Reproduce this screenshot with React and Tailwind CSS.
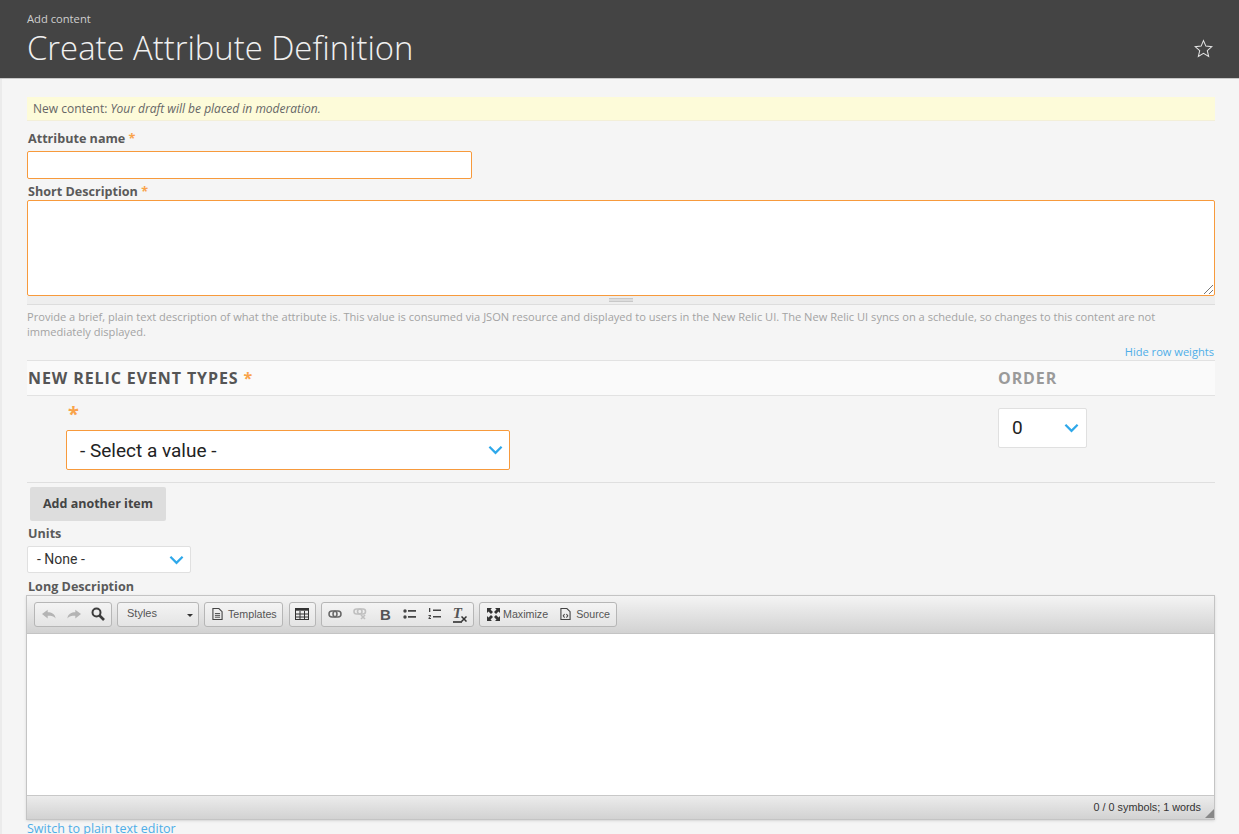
import React from "react";

const font = { fontFamily: '"Open Sans", sans-serif' };

function Chevron({ className }) {
  return (
    <svg viewBox="0 0 16 10" className={className} fill="none" stroke="#2ea8ea" strokeWidth="2.4">
      <path d="M1.5 1.5 8 8l6.5-6.5" />
    </svg>
  );
}

function Req() {
  return <span className="text-[#f9a34a]">*</span>;
}

function ToolGroup({ className = "", children }) {
  return (
    <div className={`h-[25px] flex items-center rounded-[3px] border border-[#b6b6b6] bg-gradient-to-b from-[#f4f4f4] to-[#e4e4e4] ${className}`}>
      {children}
    </div>
  );
}

function PageIcon({ className = "" }) {
  return (
    <svg viewBox="0 0 12 14" className={`w-[11px] h-[14px] shrink-0 ${className}`} fill="none" stroke="#444" strokeWidth="1.2">
      <path d="M1 1h6.500L11 4.500V13H1z" />
      <path d="M3.200 6.500h5.600M3.200 8.500h5.600M3.200 10.500h5.600" strokeWidth="1" />
    </svg>
  );
}

function Toolbar() {
  return (
    <div className="h-[38px] flex items-center pl-[7px] pb-[1px] bg-gradient-to-b from-[#f4f4f4] to-[#d2d2d2] border-b border-[#c4c4c4]">
      <ToolGroup className="w-[78px] pl-[7px]">
        <svg viewBox="0 0 16 12" className="w-[14px] h-[12px] shrink-0" fill="#b4b4b4">
          <path d="M0 6 6.500 1v3C11 4 15 6 15.500 11 13.500 8.500 11 8 6.500 8v3z" />
        </svg>
        <svg viewBox="0 0 16 12" className="w-[14px] h-[12px] shrink-0 ml-[11px]" fill="#b4b4b4">
          <path d="M16 6 9.500 1v3C5 4 1 6 .5 11 2.500 8.500 5 8 9.500 8v3z" />
        </svg>
        <svg viewBox="0 0 14 14" className="w-[14px] h-[14px] shrink-0 ml-[10px]" fill="none" stroke="#3c3c3c">
          <circle cx="5.500" cy="5.500" r="4" strokeWidth="2" />
          <path d="m8.500 8.500 4.500 4.500" strokeWidth="2.600" />
        </svg>
      </ToolGroup>
      <ToolGroup className="w-[82px] ml-[5px] pl-[9px] pr-[5px] justify-between text-[#555]">
        <span className="text-[11px] -mt-[2px]">Styles</span>
        <span className="w-0 h-0 border-x-[3px] border-x-transparent border-t-[3px] border-t-[#333] mt-[2px]" />
      </ToolGroup>
      <ToolGroup className="w-[79px] ml-[5px] pl-[7px] gap-[5px] text-[#555]">
        <PageIcon />
        <span className="text-[10.700px]">Templates</span>
      </ToolGroup>
      <ToolGroup className="w-[27px] ml-[6px] pl-[5px]">
        <svg viewBox="0 0 14 12" className="w-[14px] h-[12px]" fill="none" stroke="#333">
          <rect x=".5" y=".5" width="13" height="11" />
          <path d="M.5 1.500h13" strokeWidth="2.400" />
          <path d="M.5 6h13M.5 9h13M5 3v9M9.500 3v9" />
        </svg>
      </ToolGroup>
      <ToolGroup className="w-[153px] ml-[5px] pl-[6px]">
        <svg viewBox="0 0 14 8" className="w-[14px] h-[8px] shrink-0" fill="none" stroke="#666" strokeWidth="1.500">
          <rect x="1" y="1" width="8" height="6" rx="3" />
          <rect x="5" y="1" width="8" height="6" rx="3" />
        </svg>
        <svg viewBox="0 0 14 12" className="w-[14px] h-[12px] shrink-0 ml-[11px]" fill="none" stroke="#c0c0c0" strokeWidth="1.600">
          <rect x="1" y="1" width="8" height="5" rx="2.500" />
          <rect x="4.500" y="1" width="8" height="5" rx="2.500" />
          <path d="m8 7 4 4m0-4-4 4" />
        </svg>
        <span className="text-[15px] font-bold text-[#555] ml-[13px] leading-none">B</span>
        <svg viewBox="0 0 13 10" className="w-[13px] h-[10px] shrink-0 ml-[12px]" fill="#444">
          <circle cx="2" cy="2" r="1.700" />
          <circle cx="2" cy="8" r="1.700" />
          <path d="M5 1h8v1.800H5zM5 7h8v1.800H5z" />
        </svg>
        <svg viewBox="0 0 13 12" className="w-[13px] h-[12px] shrink-0 ml-[12px]" fill="#444">
          <path d="M1 0h1.300v4H1zM.5 7h2.500v1L1.500 10H3v1H.5v-1L2 8H.5zM5 1.500h8v1.500H5zM5 8h8v1.500H5z" />
        </svg>
        <span className="relative ml-[11px] w-[15px] h-[15px] shrink-0">
          <span className="absolute left-[1px] -top-[1px] text-[15px] font-bold italic text-[#555] leading-none border-b-2 border-[#555]" style={{ fontFamily: '"Liberation Serif", serif' }}>T</span>
          <svg viewBox="0 0 6 6" className="absolute right-0 bottom-0 w-[6px] h-[6px]" fill="none" stroke="#333" strokeWidth="1.500">
            <path d="m.5.500 5 5m0-5-5 5" />
          </svg>
        </span>
      </ToolGroup>
      <ToolGroup className="w-[138px] ml-[5px] pl-[7px] text-[#555]">
        <svg viewBox="0 0 13 13" className="w-[13px] h-[13px] shrink-0" fill="#333">
          <path d="M0 0h5L3.500 1.500 6 4 4 6 1.500 3.500 0 5zM13 0v5l-1.500-1.500L9 6 7 4l2.500-2.500L8 0zM0 13V8l1.500 1.500L4 7l2 2-2.500 2.500L5 13zM13 13H8l1.500-1.500L7 9l2-2 2.500 2.500L13 8z" />
        </svg>
        <span className="text-[10.700px] ml-[3px]">Maximize</span>
        <svg viewBox="0 0 12 14" className="w-[11px] h-[14px] shrink-0 ml-[12px]" fill="none" stroke="#444" strokeWidth="1.200">
          <path d="M1 1h6.500L11 4.500V13H1z" />
          <path d="M5 7 3.500 9 5 11M7 7l1.500 2L7 11" strokeWidth="1.100" />
        </svg>
        <span className="text-[10.700px] ml-[5px]">Source</span>
      </ToolGroup>
    </div>
  );
}

export default function App() {
  return (
    <div className="h-[834px] overflow-hidden bg-[#f5f5f5] text-[#555]" style={font}>
      <header className="h-[79px] bg-[#444444] border-b border-[#c8c8c8] pl-[27px] pr-[26px] relative">
        <div className="pt-[11px] text-[11.200px] leading-[15px] text-[#cfcfcf]">Add content</div>
        <h1 className="mt-[2px] text-[32.800px] leading-[40px] font-light text-[#f0f0f0]">Create Attribute Definition</h1>
        <svg viewBox="0 0 24 24" className="absolute right-[26px] top-[39px] w-[19px] h-[19px]" fill="none" stroke="#e4e4e4" strokeWidth="1.300">
          <path d="m12 2 3 7 7.500.7-5.700 5 1.700 7.300L12 18.200 5.500 22l1.700-7.300-5.700-5L9 9z" />
        </svg>
      </header>

      <main className="pl-[25px] pr-[24px] pt-[18px] border-l-2 border-[#ebebeb]">
        <div className="h-[24px] pl-[6px] bg-[#fdfbd9] border-b border-[#f3efd8] text-[12px] leading-[23px] text-[#666]">
          New content: <em>Your draft will be placed in moderation.</em>
        </div>

        <label className="block mt-[9px] ml-[1px] text-[12.600px] leading-[18px] font-bold text-[#5a5a5a]">Attribute name <Req /></label>
        <div className="mt-[3px] w-[445px] h-[28px] bg-white border border-[#f79a3c] rounded-[2px]" />

        <label className="block mt-[4px] ml-[1px] text-[12.600px] leading-[17px] font-bold text-[#5a5a5a]">Short Description <Req /></label>
        <div className="relative h-[96px] bg-white border border-[#f79a3c] rounded-[2px]">
          <svg viewBox="0 0 9 9" className="absolute right-[1px] bottom-[1px] w-[9px] h-[9px]" stroke="#777">
            <path d="M9 0 0 9M9 5 5 9" />
          </svg>
        </div>
        <div className="h-[9px] bg-[#eeeeee] border-b border-[#dddddd] flex justify-center pt-[2px]">
          <span className="w-[24px] h-[4px] border-y border-[#c8c8c8] bg-[#dddddd]" />
        </div>
        <p className="mt-[4px] text-[11.100px] leading-[15px] text-[#a3a3a3]">
          Provide a brief, plain text description of what the attribute is. This value is consumed via JSON resource and displayed to users in the New Relic UI. The New Relic UI syncs on a schedule, so changes to this content are not immediately displayed.
        </p>
        <div className="mt-[5px] pr-[1px] text-right text-[11.100px] leading-[15px] text-[#4eaee8]">Hide row weights</div>

        <div className="mt-[1px] h-[36px] flex items-center bg-[#fafafa] border-y border-[#e2e2e2] font-bold text-[16px] tracking-[0.900px]">
          <div className="w-[971px] pl-[1px] text-[#555]">NEW RELIC EVENT TYPES <Req /></div>
          <div className="text-[#9a9a9a]">ORDER</div>
        </div>

        <div className="h-[87px] flex border-b border-[#dfdfdf]">
          <div className="w-[971px] pl-[39px]">
            <div className="h-[34px] pl-[2px] pt-[6px] text-[20px] leading-[24px] font-bold"><Req /></div>
            <div className="w-[444px] h-[40px] flex items-center justify-between pl-[13px] pr-[6px] bg-white border border-[#f79a3c] rounded-[2px]">
              <span className="mt-[2px] text-[19px] text-[#222]" style={{ fontFamily: "Roboto, sans-serif" }}>- Select a value -</span>
              <Chevron className="w-[15px] h-[10px]" />
            </div>
          </div>
          <div className="pt-[12px]">
            <div className="w-[89px] h-[40px] flex items-center justify-between pl-[13px] pr-[7px] bg-white border border-[#e0e0e0] rounded-[2px]">
              <span className="text-[19px] text-[#222]" style={{ fontFamily: "Roboto, sans-serif" }}>0</span>
              <Chevron className="w-[15px] h-[10px]" />
            </div>
          </div>
        </div>

        <button className="block mt-[4px] ml-[3px] w-[136px] h-[34px] rounded-[2px] bg-[#dddddd] text-[12.500px] font-bold text-[#444]">Add another item</button>

        <label className="block mt-[4px] ml-[1px] text-[12.600px] leading-[18px] font-bold text-[#5a5a5a]">Units</label>
        <div className="mt-[3px] w-[164px] h-[27px] flex items-center justify-between pl-[9px] pr-[6px] bg-white border border-[#e0e0e0] rounded-[2px]">
          <span className="text-[14px] text-[#333]" style={{ fontFamily: "Roboto, sans-serif" }}>- None -</span>
          <Chevron className="w-[15px] h-[10px]" />
        </div>

        <label className="block mt-[5px] ml-[1px] text-[12.600px] leading-[17px] font-bold text-[#5a5a5a]">Long Description</label>

        <div className="-ml-[1px] h-[225px] border border-[#c4c4c4] shadow-sm" style={{ fontFamily: '"Liberation Sans", sans-serif' }}>
          <Toolbar />
          <div className="h-[161px] bg-white" />
          <div className="h-[24px] relative bg-gradient-to-b from-[#ececec] to-[#d2d2d2] border-t border-[#c8c8c8] pr-[13px] text-right text-[10.800px] leading-[22px] text-[#333]">
            0 / 0 symbols; 1 words
            <span className="absolute right-0 bottom-[1px] w-0 h-0 border-l-[9px] border-l-transparent border-b-[9px] border-b-[#888]" />
          </div>
        </div>

        <div className="mt-[1px] text-[12.500px] leading-[16px] text-[#4eaee8]">Switch to plain text editor</div>
      </main>
    </div>
  );
}
